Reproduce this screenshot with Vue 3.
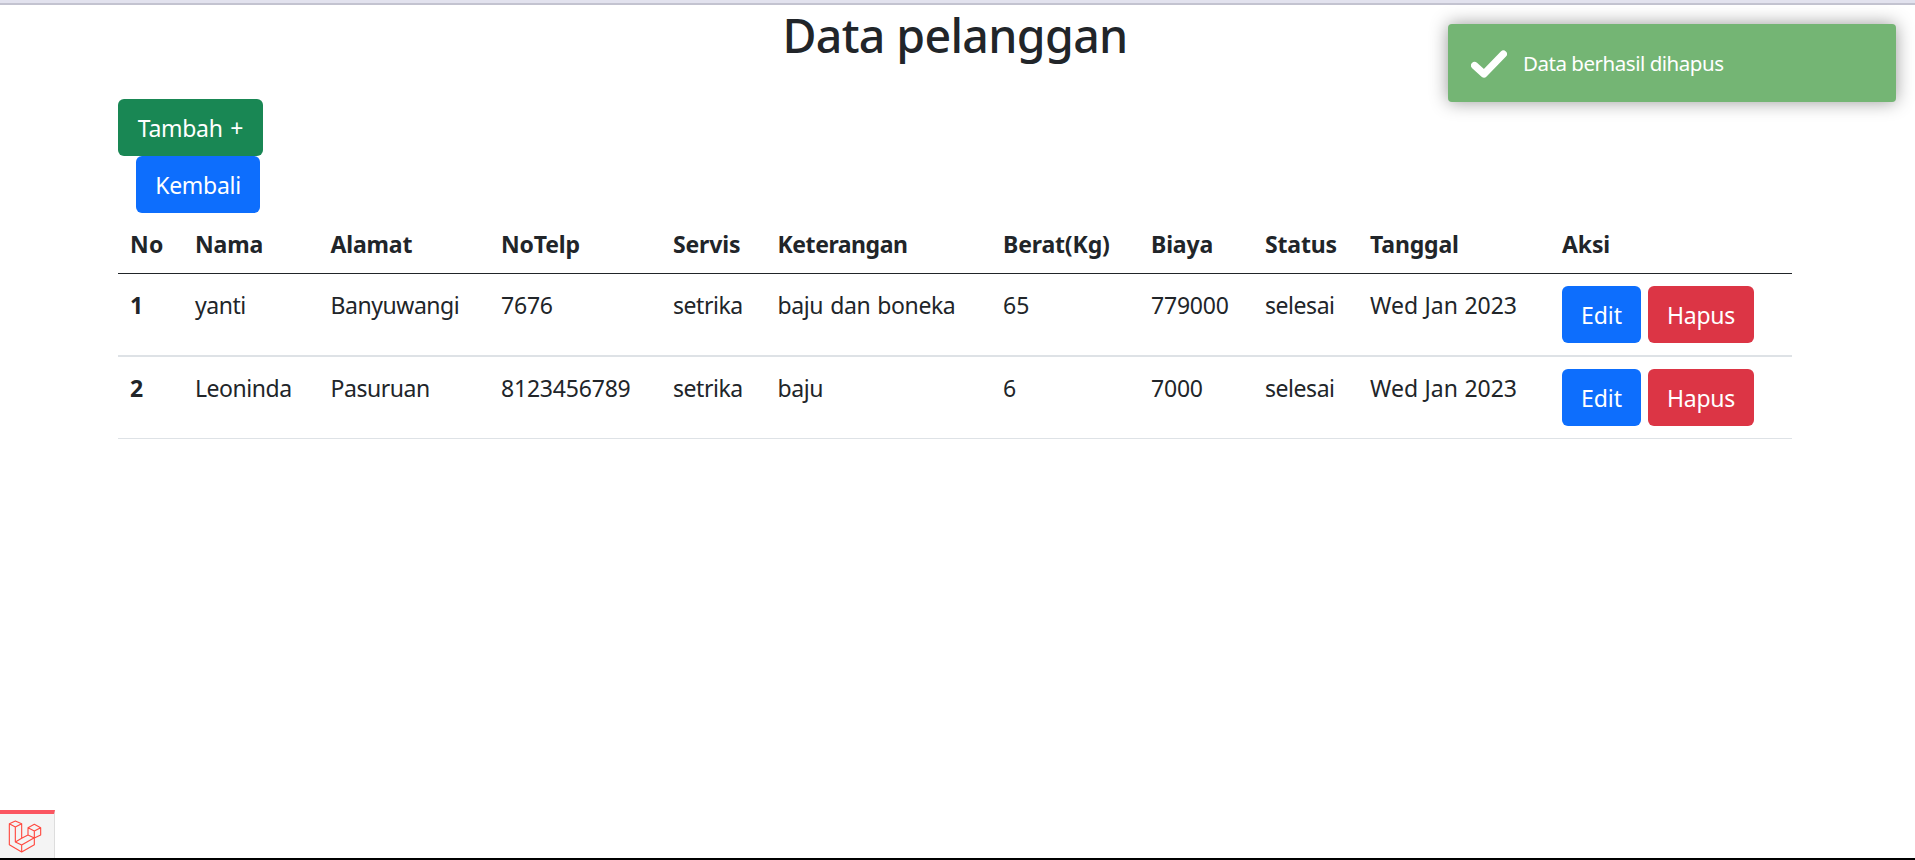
<script setup>
const columns = ['No', 'Nama', 'Alamat', 'NoTelp', 'Servis', 'Keterangan', 'Berat(Kg)', 'Biaya', 'Status', 'Tanggal', 'Aksi']
const customers = [
  ['1', 'yanti', 'Banyuwangi', '7676', 'setrika', 'baju dan boneka', '65', '779000', 'selesai', 'Wed Jan 2023'],
  ['2', 'Leoninda', 'Pasuruan', '8123456789', 'setrika', 'baju', '6', '7000', 'selesai', 'Wed Jan 2023'],
]
</script>

<template>
  <div class="page">
    <div class="topbar"></div>
    <main class="container">
      <h1>Data pelanggan</h1>
      <div class="actions">
        <button class="btn green add"><span>Tambah +</span></button>
        <button class="btn blue back"><span>Kembali</span></button>
      </div>
      <table>
        <colgroup><col v-for="(c, i) in columns" :key="c" :class="'c' + i" /></colgroup>
        <thead>
          <tr><th v-for="c in columns" :key="c">{{ c }}</th></tr>
        </thead>
        <tbody>
          <tr v-for="row in customers" :key="row[0]">
            <th>{{ row[0] }}</th>
            <td v-for="(v, i) in row.slice(1)" :key="i" :class="'t' + (i + 1)">{{ v }}</td>
            <td class="cell-actions">
              <div class="pair">
                <button class="btn blue edit"><span>Edit</span></button>
                <button class="btn red delete"><span>Hapus</span></button>
              </div>
            </td>
          </tr>
        </tbody>
      </table>
    </main>
    <div class="toast">
      <svg class="check" viewBox="0 0 36 28"><path d="M3.6 15.5 L13 24 L32.4 4" /></svg>
      <span>Data berhasil dihapus</span>
    </div>
    <div class="debugbar">
      <svg viewBox="0 0 102 99">
        <path d="M4 11 L22 3 L41 11 L22 21 Z M4 11 V74 L41 96 L79 74 V53 M22 21 V66 L41 75 V96 M41 11 V55 L22 66 M41 75 L79 53 M41 55 L60 45 M60 23 L79 13 L98 23 L79 33 Z M60 23 V45 L79 54 L98 45 V23 M79 33 V54" />
      </svg>
    </div>
  </div>
</template>

<style>
body { margin: 0; overflow: hidden; }
</style>

<style scoped>
.page {
  box-sizing: border-box;
  position: relative;
  height: 860px;
  overflow: hidden;
  background: #fff;
  border-bottom: 2px solid #000;
  color: #212529;
  font: 23px/36px "Noto Sans", sans-serif;
}
.topbar { box-sizing: border-box; height: 5px; background: #e2e2ee; border-bottom: 2px solid #c3c3d0; }
.container { width: 1674px; margin-left: 118px; }
h1 { margin: 0; height: 94px; padding-top: 1px; box-sizing: border-box; text-align: center; font-size: 46.5px; line-height: 58px; font-weight: 500; letter-spacing: -0.65px; }
.actions { display: flex; flex-direction: column; align-items: flex-start; }
.btn { display: flex; align-items: center; justify-content: center; box-sizing: border-box; height: 57px; padding: 1px 0 0; border: 0; border-radius: 6px; color: #fff; font: inherit; letter-spacing: -0.3px; white-space: nowrap; }
.green { background: #198754; }
.blue { background: #0d6efd; }
.red { background: #dc3545; }
.add { width: 145px; word-spacing: 2px; }
.back { width: 124px; margin-left: 18px; }
.edit { width: 79px; letter-spacing: 0; }
.delete { width: 106px; }
table { width: 1674px; table-layout: fixed; border-collapse: separate; border-spacing: 0; }
th, td { box-sizing: border-box; padding: 12px 0 0 12px; text-align: left; vertical-align: top; white-space: nowrap; }
thead th { height: 61px; border-bottom: 1px solid #212529; padding-top: 13px; letter-spacing: -0.15px; }
thead th:nth-child(6) { letter-spacing: -0.45px; }
thead th:nth-child(1) { letter-spacing: 0.2px; }
tbody th, tbody td { height: 83px; border-bottom: 2px solid #dee2e6; padding-top: 13px; }
tbody tr:last-child th, tbody tr:last-child td { height: 82px; border-bottom-width: 1px; padding-top: 13px; }
tbody .cell-actions, tbody tr:last-child .cell-actions { padding-top: 12px; }
.t1, .t2 { letter-spacing: -0.45px; }
.t3, .t7 { letter-spacing: -0.2px; }
.t4, .t8 { letter-spacing: -0.45px; }
.t5 { letter-spacing: -0.4px; word-spacing: 1.5px; }
.t9 { word-spacing: 0.5px; }
.pair { display: flex; gap: 7px; }
.c0 { width: 65px; }
.c1 { width: 135.5px; }
.c2 { width: 170.5px; }
.c3 { width: 172px; }
.c4 { width: 104.5px; }
.c5 { width: 225.5px; }
.c6 { width: 148px; }
.c7 { width: 114px; }
.c8 { width: 105px; }
.c9 { width: 192px; }
.c10 { width: 242px; }
.toast {
  position: absolute;
  top: 24px;
  left: 1448px;
  width: 448px;
  height: 78px;
  box-sizing: border-box;
  padding-left: 23px;
  display: flex;
  align-items: center;
  gap: 16px;
  border-radius: 4px;
  background: #74b574;
  box-shadow: 0 0 18px #999;
  color: #fff;
  font-size: 20.5px;
  letter-spacing: -0.47px;
}
.check { width: 36px; height: 28px; margin-top: 2px; fill: none; stroke: #fff; stroke-width: 7.2; stroke-linecap: round; stroke-linejoin: round; }
.debugbar { position: absolute; left: 0; bottom: 0; box-sizing: border-box; width: 55px; height: 48px; border-top: 4px solid #fb5661; border-right: 1px solid #ddd; background: #f4f4f4; padding: 6px 0 0 8px; }
.debugbar svg { display: block; width: 34px; height: 33px; fill: none; stroke: #ff4a40; stroke-width: 3.4; stroke-linejoin: round; }
</style>
